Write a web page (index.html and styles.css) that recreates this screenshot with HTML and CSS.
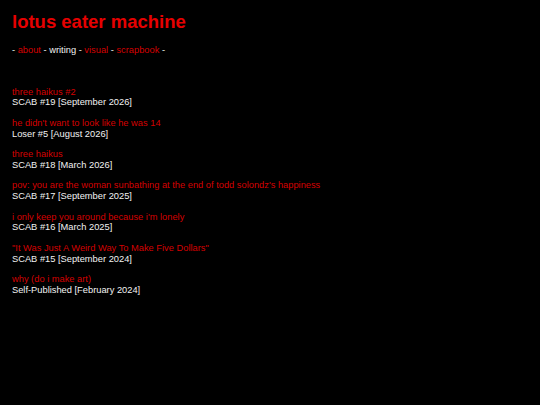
FILE: index.html
```html
<!DOCTYPE html>
<html>
<head>
<meta charset="utf-8">
<link rel="stylesheet" href="styles.css">
</head>
<body>
<h1 class="title">lotus eater machine</h1>
<nav class="nav">- <a href="#">about</a> - <span class="current">writing</span> - <a href="#">visual</a> - <a href="#">scrapbook</a> -</nav>
<div class="list">
  <div class="entry"><a href="#">three haikus #2</a><div class="meta">SCAB #19 [September 2026]</div></div>
  <div class="entry"><a href="#">he didn't want to look like he was 14</a><div class="meta">Loser #5 [August 2026]</div></div>
  <div class="entry"><a href="#">three haikus</a><div class="meta">SCAB #18 [March 2026]</div></div>
  <div class="entry"><a href="#">pov: you are the woman sunbathing at the end of todd solondz's happiness</a><div class="meta">SCAB #17 [September 2025]</div></div>
  <div class="entry"><a href="#">i only keep you around because i'm lonely</a><div class="meta">SCAB #16 [March 2025]</div></div>
  <div class="entry"><a href="#">"It Was Just A Weird Way To Make Five Dollars"</a><div class="meta">SCAB #15 [September 2024]</div></div>
  <div class="entry"><a href="#">why (do i make art)</a><div class="meta">Self-Published [February 2024]</div></div>
</div>
</body>
</html>
```
FILE: styles.css
```css
html, body {
  background: #000;
}
body {
  margin: 0;
  padding: 11px 12px;
  color: #f2f2f2;
  font-family: "Liberation Sans", Arial, sans-serif;
  font-size: 9.3px;
  line-height: 10.7px;
}
a {
  color: #d40000;
  text-decoration: none;
}
.title {
  margin: 0 0 13px;
  font-size: 18.5px;
  line-height: 21.3px;
  font-weight: bold;
  color: #e60000;
}
.nav {
  margin: 0 0 30.6px;
}
.current {
  color: #f2f2f2;
}
.list {
  display: flex;
  flex-direction: column;
  gap: 9.9px;
}
.entry {
  display: flex;
  flex-direction: column;
}
```
